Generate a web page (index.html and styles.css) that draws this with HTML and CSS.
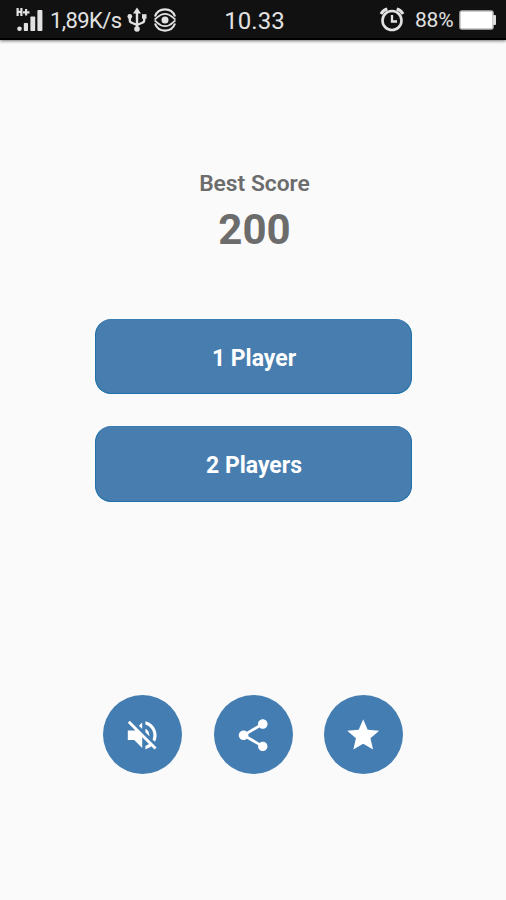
FILE: index.html
```
<!DOCTYPE html>
<html lang="en">
<head>
<meta charset="utf-8">
<title>Best Score</title>
<link rel="stylesheet" href="styles.css">
</head>
<body>
<header class="status">
  <div class="status-left">
    <svg class="signal" width="28" height="26" viewBox="0 0 28 26" fill="#e2e2e2">
      <path d="M.5 0h2.200v2.800h1.600V0h2.200v8H4.300V4.900H2.700V8H.5zM9 1h2.200v2.200h2.300v2.200h-2.300v2.200H9V5.400H7V3.200h2z"/>
      <circle cx="3.500" cy="20.700" r="2.300"/>
      <rect x="7.800" y="15" width="4.200" height="8" rx=".8"/>
      <rect x="14.400" y="8.500" width="4.800" height="14.500" rx=".8"/>
      <rect x="21.400" y="2" width="5" height="21" rx=".8"/>
    </svg>
    <span class="speed">1,89K/s</span>
    <svg class="usb" width="20" height="26" viewBox="0 0 20 26" fill="none" stroke="#e2e2e2" stroke-width="2.400">
      <path d="M10 5v17M2.800 10v3.500q0 1.500 1.500 2L10 18l5.700-2.500q1.500-.5 1.500-2V10"/>
      <path d="M10 .5l4 6H6z" fill="#e2e2e2" stroke="none"/>
      <circle cx="10" cy="22" r="2.800" fill="#e2e2e2" stroke="none"/>
      <circle cx="2.800" cy="9.500" r="2.400" fill="#e2e2e2" stroke="none"/>
      <path d="M15 7.200h4.500v4.500H15z" fill="#e2e2e2" stroke="none"/>
    </svg>
    <svg class="radar" width="24" height="24" viewBox="0 0 24 24" fill="none" stroke="#e2e2e2" stroke-width="2.200">
      <path d="M2 8.500a10.600 10.600 0 0 1 20 0M2 15.500a10.600 10.600 0 0 0 20 0"/>
      <path d="M1.500 11.500C4.500 10 6 5.800 12 5.800s7.500 4.200 10.500 5.700M1.500 12.500C4.500 14 6 18.200 12 18.200s7.500-4.200 10.500-5.700" stroke-width="1.700"/>
      <circle cx="12" cy="12" r="3.500" fill="#e2e2e2" stroke="none"/>
    </svg>
  </div>
  <span class="clock">10.33</span>
  <div class="status-right">
    <svg class="alarm" width="26" height="26" viewBox="0 0 26 26" fill="none" stroke="#e2e2e2" stroke-width="2.600">
      <circle cx="13" cy="13.500" r="9.500"/>
      <path d="M13 8v6.500h5" stroke-width="2.300"/>
      <path d="M2 7Q4 3 8.300 2M24 7Q22 3 17.700 2" stroke-width="3"/>
    </svg>
    <span class="percent">88%</span>
    <svg class="battery" width="38" height="20" viewBox="0 0 38 20">
      <rect x="1" y="1" width="33" height="18" rx="2" fill="#fff" stroke="#bdbdbd" stroke-width="1.500"/>
      <rect x="34" y="5" width="3" height="10" rx="1" fill="#ddd"/>
    </svg>
  </div>
</header>
<main class="screen">
  <div class="label">Best Score</div>
  <div class="score">200</div>
  <nav class="menu">
    <button class="play">1 Player</button>
    <button class="play">2 Players</button>
  </nav>
  <div class="actions">
    <button class="round" aria-label="Mute"><svg class="icon" viewBox="0 0 24 24"><path d="M16.500 12c0-1.770-1.020-3.290-2.500-4.030v2.210l2.450 2.450c.03-.2.05-.41.05-.63zm2.500 0c0 .94-.2 1.820-.54 2.640l1.510 1.510C20.630 14.910 21 13.500 21 12c0-4.280-2.990-7.860-7-8.770v2.060c2.890.86 5 3.540 5 6.710zM4.270 3L3 4.270 7.730 9H3v6h4l5 5v-6.730l4.250 4.250c-.67.52-1.420.93-2.250 1.180v2.060c1.380-.31 2.630-.95 3.690-1.810L19.730 21 21 19.730l-9-9L4.270 3zM12 4L9.910 6.090 12 8.180V4z"/></svg></button>
    <button class="round" aria-label="Share"><svg class="icon" viewBox="0 0 24 24"><path d="M18 16.080c-.76 0-1.440.3-1.960.77L8.910 12.700c.05-.23.09-.46.09-.7s-.04-.47-.09-.7l7.050-4.110c.54.5 1.250.81 2.040.81 1.660 0 3-1.340 3-3s-1.340-3-3-3-3 1.340-3 3c0 .24.040.47.090.7L8.040 9.810C7.500 9.310 6.790 9 6 9c-1.660 0-3 1.340-3 3s1.340 3 3 3c.79 0 1.500-.31 2.040-.81l7.120 4.160c-.05.21-.08.43-.08.65 0 1.610 1.310 2.920 2.920 2.920s2.920-1.310 2.920-2.920-1.310-2.920-2.920-2.920z"/></svg></button>
    <button class="round" aria-label="Rate"><svg class="icon" viewBox="0 0 24 24"><path d="M12 17.270L18.180 21l-1.640-7.030L22 9.240l-7.190-.61L12 2 9.190 8.630 2 9.240l5.460 4.730L5.820 21z"/></svg></button>
  </div>
</main>
</body>
</html>
```
FILE: styles.css
```
* { box-sizing: border-box; }
body {
  margin: 0;
  height: 900px;
  display: flex;
  flex-direction: column;
  background: #fafafa;
  font-family: Roboto, "Liberation Sans", sans-serif;
  overflow: hidden;
}
button {
  border: 0;
  padding: 0;
  font: inherit;
  color: #fff;
}
svg { display: block; flex: none; }
.status {
  height: 40px;
  flex: none;
  display: grid;
  grid-template-columns: 1fr auto 1fr;
  align-items: center;
  padding: 2px 9px 0 16px;
  background: #111;
  border-bottom: 2px solid #000;
  box-shadow: 0 1px 3px rgba(0, 0, 0, .55);
  color: #e2e2e2;
  white-space: nowrap;
}
.status-left,
.status-right {
  display: flex;
  align-items: center;
}
.status-right { justify-content: flex-end; }
.signal { margin-top: 2px; }
.speed { margin-left: 6px; width: 72px; font-size: 22px; line-height: 26px; letter-spacing: -.6px; margin-top: 2px; }
.usb { margin-left: 5px; }
.radar { margin-left: 6px; }
.clock { font-size: 24px; line-height: 28px; margin: 2px 4px 0 0; }
.percent { margin-left: 10px; width: 38px; font-size: 21px; line-height: 26px; letter-spacing: -.2px; }
.battery { margin-left: 6px; }
.screen {
  flex: 1;
  display: flex;
  flex-direction: column;
  align-items: center;
  padding-top: 130px;
}
.label {
  margin-left: 3px;
  font-size: 22.800px;
  line-height: 28px;
  font-weight: 600;
  color: #6c6c6c;
}
.score {
  margin: 7px 0 0 3px;
  font-size: 42px;
  line-height: 50px;
  font-weight: 700;
  color: #6c6c6c;
}
.menu {
  margin-top: 63.500px;
  display: grid;
  gap: 32px;
}
.play {
  width: 317px;
  height: 75.500px;
  border: 1px solid #1b71a8;
  border-top-color: #3c7bb0;
  border-radius: 16px;
  background: #487daf;
  font-size: 23px;
  font-weight: 700;
  padding: 4px 0 0 2px;
}
.actions {
  margin-top: 193px;
  display: flex;
  gap: 31.500px;
}
.round {
  width: 79px;
  height: 79px;
  border-radius: 50%;
  background: #437db1;
  display: grid;
  place-items: center;
  padding: 2px 0 0 0;
}
.icon {
  width: 38.400px;
  height: 38.400px;
  fill: #fff;
}
```
